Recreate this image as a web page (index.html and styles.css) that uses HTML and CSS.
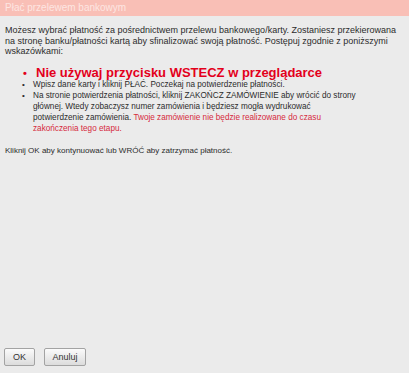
FILE: index.html
```html
<!DOCTYPE html>
<html lang="pl">
<head>
<meta charset="utf-8">
<link rel="stylesheet" href="styles.css">
</head>
<body>
<div class="dialog">
  <div class="title">Płać przelewem bankowym</div>
  <div class="content">
    <p class="intro">Możesz wybrać płatność za pośrednictwem przelewu bankowego/karty. Zostaniesz przekierowana<br>na stronę banku/płatności kartą aby sfinalizować swoją płatność. Postępuj zgodnie z poniższymi<br>wskazówkami:</p>
    <ul class="steps">
      <li class="warn">Nie używaj przycisku WSTECZ w przeglądarce</li>
      <li>Wpisz dane karty i kliknij PŁAĆ. Poczekaj na potwierdzenie płatności.</li>
      <li>Na stronie potwierdzenia płatności, kliknij ZAKOŃCZ ZAMÓWIENIE aby wrócić do strony<br>głównej. Wtedy zobaczysz numer zamówienia i będziesz mogła wydrukować<br>potwierdzenie zamówienia. <span class="red">Twoje zamówienie nie będzie realizowane do czasu<br>zakończenia tego etapu.</span></li>
    </ul>
    <p class="outro">Kliknij OK aby kontynuować lub WRÓĆ aby zatrzymać płatność.</p>
  </div>
  <div class="buttons">
    <button class="btn ok">OK</button>
    <button class="btn cancel">Anuluj</button>
  </div>
</div>
</body>
</html>
```
FILE: styles.css
```css
html, body {
  margin: 0;
  padding: 0;
  background: #ebebeb;
}
body {
  font-family: "Liberation Sans", Arial, sans-serif;
  font-size: 10px;
  color: #2b2b2b;
}
.dialog {
  width: 409px;
  height: 373px;
  display: flex;
  flex-direction: column;
}
.title {
  height: 16px;
  line-height: 16px;
  background: #f9bfb6;
  color: #fde6e2;
  padding-left: 5px;
  font-size: 10px;
}
.content {
  flex: 1;
  padding: 9px 0 0 5px;
}
.intro {
  margin: 0;
  font-size: 9px;
  line-height: 10.5px;
  white-space: nowrap;
}
.steps {
  list-style: none;
  margin: 10px 0 0 0;
  padding: 0 0 0 17px;
  font-size: 8.2px;
  line-height: 11px;
  white-space: nowrap;
}
.steps li {
  padding-left: 11px;
  text-indent: -11px;
}
.steps li::before {
  content: "•";
  display: inline-block;
  width: 11px;
  text-indent: 0;
  font-size: 8px;
}
.steps li.warn {
  color: #e3001b;
  font-weight: bold;
  font-size: 13px;
  line-height: 12px;
  padding-left: 14px;
  text-indent: -14px;
}
.steps li.warn::before {
  width: 14px;
  font-size: 11px;
  padding-left: 1px;
  box-sizing: border-box;
}
.red {
  color: #d62a3c;
}
.outro {
  margin: 11px 0 0 0;
  font-size: 8px;
  line-height: 11px;
}
.buttons {
  display: flex;
  gap: 9px;
  padding: 0 0 7px 4px;
}
.btn {
  font-family: "Liberation Sans", Arial, sans-serif;
  font-size: 9px;
  color: #333;
  height: 18px;
  padding: 0;
  background: linear-gradient(#fbfbfb, #dcdcdc);
  border: 1px solid #a3a3a3;
  border-radius: 2px;
}
.btn.ok {
  width: 31px;
}
.btn.cancel {
  width: 42px;
}
```
